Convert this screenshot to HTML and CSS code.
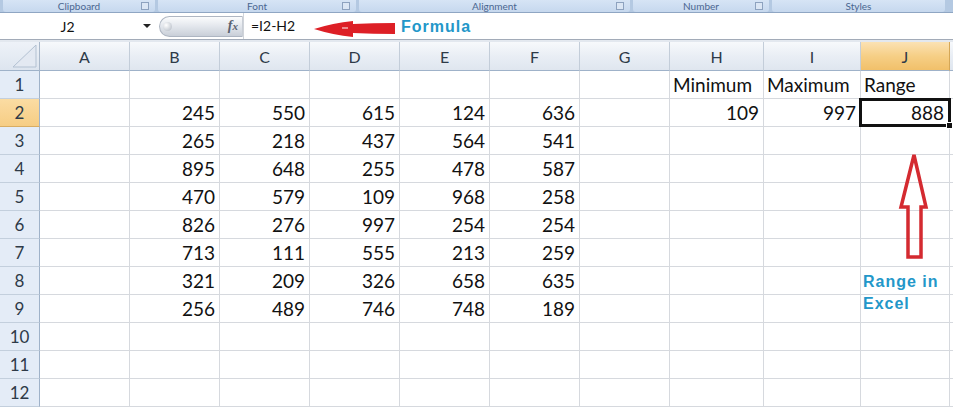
FILE: index.html
```html
<!DOCTYPE html>
<html>
<head>
<meta charset="utf-8">
<link rel="stylesheet" href="styles.css">
</head>
<body>
<div class="page">
  <div class="ribbon">
    <div class="grp g1">Clipboard<span class="launch"></span></div>
    <div class="grp g2">Font<span class="launch"></span></div>
    <div class="grp g3">Alignment<span class="launch"></span></div>
    <div class="grp g4">Number<span class="launch"></span></div>
    <div class="grp g5">Styles</div>
  </div>
  <div class="fbar">
    <div class="namebox"><span class="nbtext">J2</span><span class="drop"></span></div>
    <div class="pill"><span class="knob"></span><span class="fx">f<i>x</i></span></div>
    <div class="formula">=I2-H2</div>
    <svg class="redarrow" width="84" height="22" viewBox="0 0 84 22"><path d="M1 12 Q20 6 40 4 L40 7 Q60 6 82 6 L82 17 Q60 17 40 16 L40 20 Q20 18 1 12 Z" fill="#dd1f26"/><path d="M29 11 L35 11" stroke="#f2b3b3" stroke-width="1.5"/></svg>
    <div class="flabel">Formula</div>
  </div>
  <div class="band"></div>
  <div class="sheet">
    <div class="corner"><svg width="40" height="28" viewBox="0 0 40 28"><path d="M13 25 L36 25 L36 3 Z" fill="#e3e9f2" stroke="#b3c1d2" stroke-width="1"/></svg></div>
    <div class="ch">A</div><div class="ch">B</div><div class="ch">C</div><div class="ch">D</div><div class="ch">E</div><div class="ch">F</div><div class="ch">G</div><div class="ch">H</div><div class="ch">I</div><div class="ch sel">J</div><div class="ch"></div>

    <div class="rh">1</div><div class="c"></div><div class="c"></div><div class="c"></div><div class="c"></div><div class="c"></div><div class="c"></div><div class="c"></div><div class="c l">Minimum</div><div class="c l">Maximum</div><div class="c l">Range</div><div class="c"></div>

    <div class="rh sel">2</div><div class="c"></div><div class="c">245</div><div class="c">550</div><div class="c">615</div><div class="c">124</div><div class="c">636</div><div class="c"></div><div class="c">109</div><div class="c">997</div><div class="c active">888</div><div class="c"></div>

    <div class="rh">3</div><div class="c"></div><div class="c">265</div><div class="c">218</div><div class="c">437</div><div class="c">564</div><div class="c">541</div><div class="c"></div><div class="c"></div><div class="c"></div><div class="c"></div><div class="c"></div>

    <div class="rh">4</div><div class="c"></div><div class="c">895</div><div class="c">648</div><div class="c">255</div><div class="c">478</div><div class="c">587</div><div class="c"></div><div class="c"></div><div class="c"></div><div class="c"></div><div class="c"></div>

    <div class="rh">5</div><div class="c"></div><div class="c">470</div><div class="c">579</div><div class="c">109</div><div class="c">968</div><div class="c">258</div><div class="c"></div><div class="c"></div><div class="c"></div><div class="c"></div><div class="c"></div>

    <div class="rh">6</div><div class="c"></div><div class="c">826</div><div class="c">276</div><div class="c">997</div><div class="c">254</div><div class="c">254</div><div class="c"></div><div class="c"></div><div class="c"></div><div class="c"></div><div class="c"></div>

    <div class="rh">7</div><div class="c"></div><div class="c">713</div><div class="c">111</div><div class="c">555</div><div class="c">213</div><div class="c">259</div><div class="c"></div><div class="c"></div><div class="c"></div><div class="c"></div><div class="c"></div>

    <div class="rh">8</div><div class="c"></div><div class="c">321</div><div class="c">209</div><div class="c">326</div><div class="c">658</div><div class="c">635</div><div class="c"></div><div class="c"></div><div class="c"></div><div class="c"></div><div class="c"></div>

    <div class="rh">9</div><div class="c"></div><div class="c">256</div><div class="c">489</div><div class="c">746</div><div class="c">748</div><div class="c">189</div><div class="c"></div><div class="c"></div><div class="c"></div><div class="c"></div><div class="c"></div>

    <div class="rh">10</div><div class="c"></div><div class="c"></div><div class="c"></div><div class="c"></div><div class="c"></div><div class="c"></div><div class="c"></div><div class="c"></div><div class="c"></div><div class="c"></div><div class="c"></div>

    <div class="rh">11</div><div class="c"></div><div class="c"></div><div class="c"></div><div class="c"></div><div class="c"></div><div class="c"></div><div class="c"></div><div class="c"></div><div class="c"></div><div class="c"></div><div class="c"></div>

    <div class="rh">12</div><div class="c"></div><div class="c"></div><div class="c"></div><div class="c"></div><div class="c"></div><div class="c"></div><div class="c"></div><div class="c"></div><div class="c"></div><div class="c"></div><div class="c"></div>

    <svg class="uparrow" width="34" height="110" viewBox="0 0 34 110"><path d="M19 3 L6 55 L13 55 L13 105 L26 105 L26 55 L31 55 Z" fill="none" stroke="#d42a30" stroke-width="3.5" stroke-linejoin="miter"/></svg>
    <div class="note">Range in<br>Excel</div>
  </div>
</div>
</body>
</html>
```

FILE: styles.css
```css
html, body {
  margin: 0;
  padding: 0;
  background: #ffffff;
}
.page {
  width: 953px;
  height: 408px;
  overflow: hidden;
  position: relative;
  font-family: Lato, "Open Sans", sans-serif;
}
.ribbon {
  height: 12px;
  background: #b4c9e2;
  border-bottom: 1px solid #8fa6c3;
  display: flex;
  gap: 3px;
  padding-left: 3px;
}
.grp {
  position: relative;
  height: 12px;
  background: linear-gradient(#d6e4f5, #c6d8ee);
  border-radius: 0 0 3px 3px;
  color: #4a6690;
  font-size: 10px;
  line-height: 12px;
  text-align: center;
  font-family: Lato, sans-serif;
  box-sizing: border-box;
}
.g1 { width: 152px; }
.g2 { width: 198px; }
.g3 { width: 271px; }
.g4 { width: 136px; }
.g5 { width: 173px; }
.launch {
  position: absolute;
  right: 6px;
  top: 2px;
  width: 6px;
  height: 6px;
  border: 1px solid #8da2bf;
  background: #dbe6f4;
}
.fbar {
  height: 26px;
  display: flex;
  align-items: center;
  background: #fff;
  border-bottom: 1px solid #a2abb8;
}
.namebox {
  width: 155px;
  height: 26px;
  display: flex;
  align-items: center;
  position: relative;
  font-size: 14px;
  color: #111;
}
.nbtext {
  flex: 1;
  text-align: center;
  padding-left: 4px;
  padding-right: 12px;
}
.drop {
  width: 0;
  height: 0;
  border-left: 4px solid transparent;
  border-right: 4px solid transparent;
  border-top: 4px solid #222;
  margin-right: 4px;
}
.pill {
  width: 84px;
  height: 21px;
  margin-left: 4px;
  border-radius: 11px 0 0 11px;
  background: linear-gradient(#fbfcfd, #e2e6ec 50%, #c9cfd8);
  border: 1px solid #aeb6c2;
  border-right: 1px solid #c9ced6;
  box-sizing: border-box;
  display: flex;
  align-items: center;
  justify-content: space-between;
  padding: 0 4px 0 3px;
}
.knob {
  width: 9px;
  height: 9px;
  border-radius: 50%;
  background: radial-gradient(circle at 35% 35%, #ffffff, #aeb6c1);
}
.fx {
  font-family: "Liberation Serif", serif;
  font-style: italic;
  font-weight: bold;
  font-size: 14px;
  color: #5a6270;
}
.fx i { font-size: 11px; }
.formula {
  width: 62px;
  padding-left: 7px;
  font-size: 14px;
  color: #111;
  border-left: 1px solid #d0d4da;
  height: 26px;
  line-height: 26px;
}
.redarrow {
  margin-top: 3px;
}
.flabel {
  margin-left: 4px;
  font-family: "Liberation Sans", Arial, sans-serif;
  font-weight: bold;
  font-size: 16px;
  letter-spacing: 1px;
  color: #2397c9;
  margin-top: 1px;
}
.band {
  height: 2px;
  background: #e3e8ef;
}
.sheet {
  position: relative;
  display: grid;
  grid-template-columns: 40px repeat(7, 90px) 94px 97px 89px 1fr;
  grid-template-rows: 29px repeat(12, 28px);
}
.corner {
  background: linear-gradient(#eef2f8, #dde5ef);
  border-right: 1px solid #a9b8ca;
  border-bottom: 1px solid #9fb2c9;
  box-sizing: border-box;
}
.corner svg { display: block; }
.ch {
  background: linear-gradient(#f7f9fc, #e9eef5 50%, #dfe6ef);
  border-right: 1px solid #c3cdd9;
  border-bottom: 1px solid #9fb2c9;
  box-sizing: border-box;
  text-align: center;
  font-size: 16px;
  line-height: 29px;
  color: #2e3a48;
}
.ch.sel {
  background: linear-gradient(#fbe2b4, #f6cf86 50%, #f1c06a);
  border-right-color: #d5a756;
}
.rh {
  background: #e4ecf7;
  border-right: 1px solid #9fb2c9;
  border-bottom: 1px solid #c3cfdd;
  box-sizing: border-box;
  text-align: center;
  font-size: 17px;
  line-height: 28px;
  color: #2e3a48;
}
.rh.sel {
  background: linear-gradient(#fbdca3, #f6cd84);
  border-bottom-color: #d8ad63;
}
.c {
  border-right: 1px solid #d6d9de;
  border-bottom: 1px solid #d6d9de;
  box-sizing: border-box;
  text-align: right;
  padding: 0 4px;
  font-size: 19px;
  line-height: 27px;
  color: #111;
  white-space: nowrap;
  overflow: visible;
}
.c.l { text-align: left; padding-left: 3px; }
.c.active {
  position: relative;
  padding-right: 5px;
}
.c.active::after {
  content: "";
  position: absolute;
  left: -2px;
  top: -1px;
  right: -2px;
  bottom: -1px;
  border: 3px solid #111;
}
.c.active::before {
  content: "";
  position: absolute;
  right: -4px;
  bottom: -3px;
  width: 5px;
  height: 5px;
  background: #111;
  border: 1px solid #fff;
  z-index: 1;
}
.uparrow {
  position: absolute;
  left: 895px;
  top: 110px;
}
.note {
  position: absolute;
  left: 863px;
  top: 229px;
  font-family: "Liberation Sans", Arial, sans-serif;
  font-weight: bold;
  font-size: 16px;
  letter-spacing: 1px;
  line-height: 22px;
  color: #2397c9;
}
```
